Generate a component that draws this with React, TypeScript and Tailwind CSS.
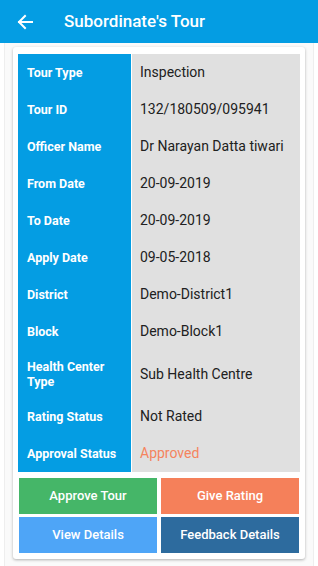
import React from "react";

const rows: { label: React.ReactNode; value: string; h: string; color?: string }[] = [
  { label: "Tour Type", value: "Inspection", h: "h-[37px]" },
  { label: "Tour ID", value: "132/180509/095941", h: "h-[37px]" },
  { label: "Officer Name", value: "Dr Narayan Datta tiwari", h: "h-[37px]" },
  { label: "From Date", value: "20-09-2019", h: "h-[37px]" },
  { label: "To Date", value: "20-09-2019", h: "h-[37px]" },
  { label: "Apply Date", value: "09-05-2018", h: "h-[37px]" },
  { label: "District", value: "Demo-District1", h: "h-[37px]" },
  { label: "Block", value: "Demo-Block1", h: "h-[37px]" },
  { label: <>Health Center<br />Type</>, value: "Sub Health Centre", h: "h-[48px]" },
  { label: "Rating Status", value: "Not Rated", h: "h-[37px]" },
  { label: "Approval Status", value: "Approved", h: "h-[37px]", color: "text-[#f5845e]" },
];

export default function App() {
  return (
    <div className="w-[318px] h-[566px] bg-white flex flex-col overflow-hidden" style={{ fontFamily: "Roboto, 'Noto Sans', sans-serif" }}>
      <div className="h-[43px] bg-[#049de3] flex items-center shrink-0">
        <svg width="16" height="16" viewBox="0 0 16 16" className="ml-[17px]">
          <path d="M15 8H2M8 2L2 8l6 6" stroke="white" strokeWidth="2" fill="none" strokeLinecap="square" />
        </svg>
        <div className="ml-[31px] text-white text-[17px] font-medium">Subordinate's Tour</div>
      </div>
      <div className="flex-1 mx-[4px] px-[8px] pt-[4px] pb-[6px] bg-[#fafafa] border-x border-[#eeeeee]">
        <div className="bg-white rounded-[3px] shadow-[0_1px_3px_rgba(0,0,0,0.3)] px-[5px] pt-[7px] pb-[6px]">
          <div className="flex flex-col">
            {rows.map((r, i) => (
              <div key={i} className={`flex ${r.h}`}>
                <div className="w-[113px] bg-[#049de3] text-white font-bold text-[12.5px] leading-[15px] flex items-center pl-[9px]">
                  {r.label}
                </div>
                <div className={`flex-1 ml-[1px] bg-[#e0e0e0] text-[14px] flex items-center pl-[8px] ${r.color ?? "text-[#212121]"}`}>
                  {r.value}
                </div>
              </div>
            ))}
          </div>
          <div className="grid grid-cols-2 gap-x-[4px] gap-y-[3px] mt-[6px] px-[1px]">
            <div className="h-[36px] bg-[#45b668] text-white text-[13px] font-medium flex items-center justify-center">Approve Tour</div>
            <div className="h-[36px] bg-[#f5805a] text-white text-[13px] font-medium flex items-center justify-center">Give Rating</div>
            <div className="h-[36px] bg-[#4ea5f7] text-white text-[13px] font-medium flex items-center justify-center">View Details</div>
            <div className="h-[36px] bg-[#2d6b9e] text-white text-[13px] font-medium flex items-center justify-center">Feedback Details</div>
          </div>
        </div>
      </div>
    </div>
  );
}
